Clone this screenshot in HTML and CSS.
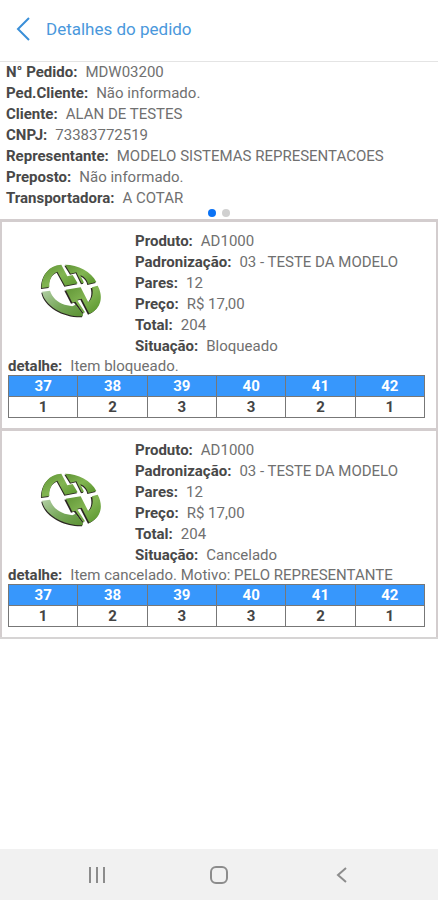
FILE: index.html
```html
<!DOCTYPE html>
<html lang="pt-BR">
<head>
<meta charset="utf-8">
<meta name="viewport" content="width=device-width, initial-scale=1">
<title>Detalhes do pedido</title>
<link rel="stylesheet" href="styles.css">
</head>
<body>
<svg class="defs" aria-hidden="true">
  <defs>
    <linearGradient id="leaf" x1="0" y1="0" x2="1" y2="1">
      <stop offset="0" stop-color="#5f9335"/>
      <stop offset="0.5" stop-color="#82b552"/>
      <stop offset="1" stop-color="#56932a"/>
    </linearGradient>
    <linearGradient id="leaf-light" x1="0" y1="0" x2="1" y2="1">
      <stop offset="0" stop-color="#b3cfa6"/>
      <stop offset="0.5" stop-color="#79a95c"/>
      <stop offset="1" stop-color="#5b9232"/>
    </linearGradient>
    <path id="logo-a" d="M11 87 C10 48 34 18 70 17 L88 52 L104 48 L119 73 L81 80 L58 38 C42 44 33 62 34 84 Z"/>
    <path id="logo-b" d="M81 17 C120 17 160 38 175 69 L150 75 C148 64 142 55 127 48 L138 71 L131 73 L115 40 L98 44 Z"/>
    <path id="logo-c" d="M12 98 L36 95 C43 115 58 130 80 137 L103 142 L113 137 L135 166 L134 172 C80 174 20 142 12 98 Z"/>
    <path id="logo-d" d="M83 92 L128 85 L151 130 C163 120 167 102 162 85 L179 80 C197 112 190 150 154 164 L131 119 L117 123 L141 160 L136 162 L112 128 L103 131 Z"/>
    <symbol id="logo" viewBox="0 0 198 192">
      <g class="logo-shadow">
        <use href="#logo-a" transform="translate(-2 3)"/>
        <use href="#logo-b" transform="translate(-2 3)"/>
        <use href="#logo-c" transform="translate(-2 3)"/>
        <use href="#logo-d" transform="translate(-4 3)"/>
      </g>
      <use href="#logo-a" fill="url(#leaf)"/>
      <use href="#logo-b" fill="url(#leaf)"/>
      <use href="#logo-c" fill="url(#leaf-light)"/>
      <use href="#logo-d" fill="url(#leaf)"/>
    </symbol>
  </defs>
</svg>

<header class="topbar">
  <button class="back" type="button" aria-label="Voltar">
    <svg viewBox="0 0 14 24" width="14" height="24"><path d="M13 1 L2 12 L13 23"/></svg>
  </button>
  <h1 class="title">Detalhes do pedido</h1>
</header>

<main class="content">
  <section class="info">
    <p class="line"><strong>N° Pedido:</strong><span>MDW03200</span></p>
    <p class="line"><strong>Ped.Cliente:</strong><span>Não informado.</span></p>
    <p class="line"><strong>Cliente:</strong><span>ALAN DE TESTES</span></p>
    <p class="line"><strong>CNPJ:</strong><span>73383772519</span></p>
    <p class="line"><strong>Representante:</strong><span>MODELO SISTEMAS REPRESENTACOES</span></p>
    <p class="line"><strong>Preposto:</strong><span>Não informado.</span></p>
    <p class="line"><strong>Transportadora:</strong><span>A COTAR</span></p>
    <div class="dots"><span class="dot dot-active"></span><span class="dot"></span></div>
  </section>

  <div class="items">
    <article class="card">
      <div class="product">
        <div class="thumb"><svg class="logo"><use href="#logo"/></svg></div>
        <div class="fields">
          <p class="line"><strong>Produto:</strong><span>AD1000</span></p>
          <p class="line"><strong>Padronização:</strong><span>03 - TESTE DA MODELO</span></p>
          <p class="line"><strong>Pares:</strong><span>12</span></p>
          <p class="line"><strong>Preço:</strong><span>R$ 17,00</span></p>
          <p class="line"><strong>Total:</strong><span>204</span></p>
          <p class="line"><strong>Situação:</strong><span>Bloqueado</span></p>
        </div>
      </div>
      <p class="line detail"><strong>detalhe:</strong><span>Item bloqueado.</span></p>
      <table class="sizes">
        <thead><tr><th>37</th><th>38</th><th>39</th><th>40</th><th>41</th><th>42</th></tr></thead>
        <tbody><tr><td>1</td><td>2</td><td>3</td><td>3</td><td>2</td><td>1</td></tr></tbody>
      </table>
    </article>

    <article class="card">
      <div class="product">
        <div class="thumb"><svg class="logo"><use href="#logo"/></svg></div>
        <div class="fields">
          <p class="line"><strong>Produto:</strong><span>AD1000</span></p>
          <p class="line"><strong>Padronização:</strong><span>03 - TESTE DA MODELO</span></p>
          <p class="line"><strong>Pares:</strong><span>12</span></p>
          <p class="line"><strong>Preço:</strong><span>R$ 17,00</span></p>
          <p class="line"><strong>Total:</strong><span>204</span></p>
          <p class="line"><strong>Situação:</strong><span>Cancelado</span></p>
        </div>
      </div>
      <p class="line detail"><strong>detalhe:</strong><span>Item cancelado. Motivo: PELO REPRESENTANTE</span></p>
      <table class="sizes">
        <thead><tr><th>37</th><th>38</th><th>39</th><th>40</th><th>41</th><th>42</th></tr></thead>
        <tbody><tr><td>1</td><td>2</td><td>3</td><td>3</td><td>2</td><td>1</td></tr></tbody>
      </table>
    </article>
  </div>
</main>

<nav class="navbar" aria-label="Sistema">
  <button type="button" aria-label="Recentes">
    <svg viewBox="0 0 20 20" width="20" height="20"><path d="M3 2 V18 M10 2 V18 M17 2 V18"/></svg>
  </button>
  <button type="button" aria-label="Início">
    <svg viewBox="0 0 20 20" width="20" height="20"><rect x="2" y="2" width="16" height="16" rx="5"/></svg>
  </button>
  <button type="button" aria-label="Voltar">
    <svg viewBox="0 0 20 20" width="20" height="20"><path d="M15 3 L7 10 L15 17"/></svg>
  </button>
</nav>
</body>
</html>
```
FILE: styles.css
```css
* {
  box-sizing: border-box;
}

body {
  margin: 0;
  min-height: 100vh;
  display: flex;
  flex-direction: column;
  background: #fff;
  color: #707070;
  font-family: Roboto, "Liberation Sans", sans-serif;
  font-size: 15px;
}

button {
  display: flex;
  align-items: center;
  justify-content: center;
  padding: 0;
  border: 0;
  background: none;
}

svg {
  fill: none;
}

.defs {
  position: absolute;
  width: 0;
  height: 0;
}

.topbar {
  display: flex;
  align-items: center;
  gap: 16px;
  height: 62px;
  padding: 0 16px 4px;
  border-bottom: 1px solid #e4e4e4;
}

.back path {
  stroke: #3a8fd8;
  stroke-width: 2;
}

.title {
  margin: 0;
  color: #4a98dc;
  font-size: 17px;
  font-weight: 400;
}

.content {
  flex: 1;
}

.line {
  display: flex;
  gap: 8px;
  margin: 0;
  line-height: 21px;
}

.line strong {
  color: #484848;
  font-weight: 700;
}

.info .line {
  padding-left: 6px;
}

.dots {
  display: flex;
  justify-content: center;
  gap: 6px;
  padding-bottom: 2px;
}

.dot {
  width: 8px;
  height: 8px;
  border-radius: 50%;
  background: #d0d0d0;
}

.dot-active {
  background: #0a72f5;
}

.items {
  border-bottom: 2px solid #d6d4d4;
}

.card {
  padding: 9px 11px 10px 6px;
  border: 2px solid #d3cdce;
  border-top-width: 3px;
  border-bottom: 0;
}

.product {
  display: flex;
}

.thumb {
  width: 127px;
  padding: 28px 0 0 30px;
}

.logo {
  display: block;
  width: 66px;
  height: 64px;
}

.logo-shadow {
  fill: #2b2622;
}

.detail {
  line-height: 18px;
}

.sizes {
  width: 100%;
  border-collapse: collapse;
  table-layout: fixed;
  color: #444;
  font-weight: 700;
  line-height: 20px;
  text-align: center;
}

.sizes th,
.sizes td {
  padding: 0;
  border: 1px solid #777;
}

.sizes th {
  border-bottom: 0;
  background: #3797fc;
  color: #fff;
}

.navbar {
  display: flex;
  justify-content: space-around;
  height: 51px;
  padding: 0 36px;
  background: #f1f1f1;
}

.navbar button {
  width: 48px;
}

.navbar svg {
  stroke: #8c8c8c;
  stroke-width: 2;
}
```
